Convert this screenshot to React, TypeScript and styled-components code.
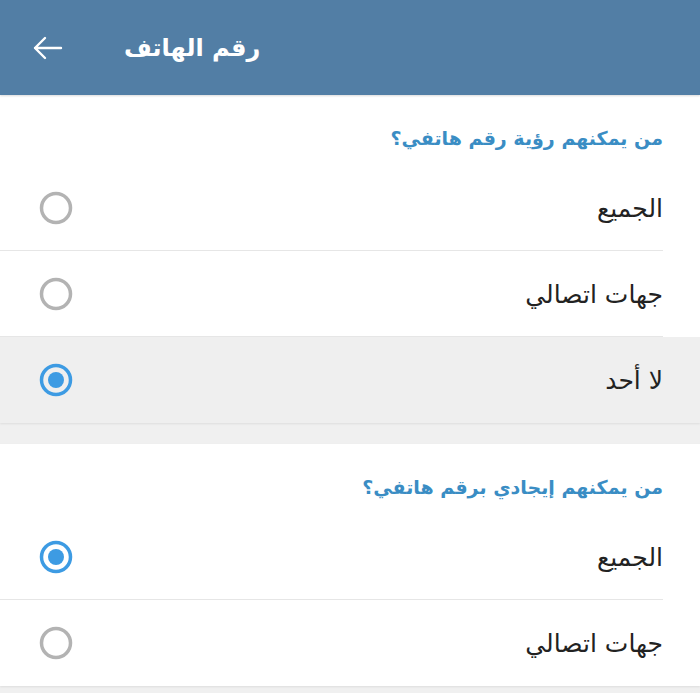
import React from 'react';
import styled, {createGlobalStyle} from 'styled-components';

interface IOption {
    label: string;
    checked: boolean;
    pressed?: boolean;
}

interface ISection {
    title: string;
    options: IOption[];
}

const sections: ISection[] = [
    {
        title: 'من يمكنهم رؤية رقم هاتفي؟',
        options: [
            {label: 'الجميع', checked: false},
            {label: 'جهات اتصالي', checked: false},
            {label: 'لا أحد', checked: true, pressed: true}
        ]
    },
    {
        title: 'من يمكنهم إيجادي برقم هاتفي؟',
        options: [
            {label: 'الجميع', checked: true},
            {label: 'جهات اتصالي', checked: false}
        ]
    }
];

const GlobalStyle = createGlobalStyle`
    body {
        margin: 0;
        background: #f0f0f0;
        font-family: "DejaVu Sans", "Noto Sans", sans-serif;
    }
`;

const Radio = ({checked}: {checked: boolean}) => (
    <svg width='36' height='36' viewBox='0 0 36 36'>
        <circle cx='18' cy='18' r='14.5' fill='none' stroke={checked ? '#3d9be3' : '#b3b3b3'} strokeWidth='3.5' />
        {checked && <circle cx='18' cy='18' r='8' fill='#3d9be3' />}
    </svg>
);

const App = () => {
    return (
        <Page dir='rtl'>
            <GlobalStyle />
            <Header>
                <HeaderTitle>رقم الهاتف</HeaderTitle>
                <BackButton>
                    <svg width='30' height='30' viewBox='0 0 30 30'>
                        <path d='M28 15H2M12 5L2 15l10 10' fill='none' stroke='#fff' strokeWidth='2.4' strokeLinecap='round' strokeLinejoin='round' />
                    </svg>
                </BackButton>
            </Header>
            {sections.map((section, index) => (
                <Section key={index}>
                    <SectionTitle>{section.title}</SectionTitle>
                    {section.options.map((option, i) => (
                        <Row key={i} pressed={option.pressed}>
                            <RowLabel>{option.label}</RowLabel>
                            <Radio checked={option.checked} />
                            {i < section.options.length - 1 && <Divider />}
                        </Row>
                    ))}
                </Section>
            ))}
        </Page>
    );
};

export default App;

const Page = styled.div`
    display: flex;
    flex-direction: column;
    gap: 21px;
    min-height: 693px;
`;

const Header = styled.header`
    position: relative;
    z-index: 1;
    display: flex;
    height: 95px;
    align-items: center;
    justify-content: flex-end;
    gap: 61px;
    padding: 0 33px;
    margin-bottom: -21px;
    background: #527ea5;
    box-shadow: 0 1px 2px rgba(0, 0, 0, 0.15);
`;

const HeaderTitle = styled.div`
    color: #fff;
    font-size: 24px;
    font-weight: bold;
`;

const BackButton = styled.div`
    display: flex;
    width: 30px;
    height: 30px;
`;

const Section = styled.section`
    background: #fff;
    box-shadow: 0 1px 2px rgba(0, 0, 0, 0.08);
`;

const SectionTitle = styled.div`
    height: 70px;
    padding: 32px 37px 0 0;
    box-sizing: border-box;
    color: #3a8dc4;
    font-size: 19px;
    font-weight: bold;
`;

const Row = styled.div<{pressed?: boolean}>`
    position: relative;
    display: flex;
    height: 86px;
    align-items: center;
    justify-content: space-between;
    padding: 0 37px 0 38px;
    background: ${(props) => (props.pressed ? '#efefef' : '#fff')};
`;

const RowLabel = styled.div`
    color: #222;
    font-size: 25px;
`;

const Divider = styled.div`
    position: absolute;
    bottom: 0;
    left: 0;
    right: 37px;
    height: 1px;
    background: #e6e6e6;
`;
